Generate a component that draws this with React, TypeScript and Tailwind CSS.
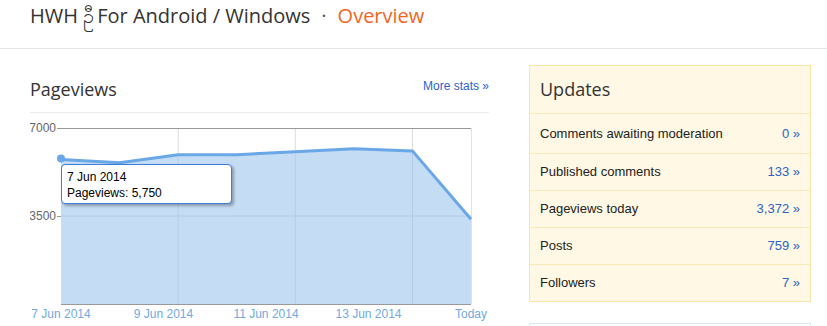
import React from "react";

type Update = { label: string; value: string };

const updates: Update[] = [
  { label: "Comments awaiting moderation", value: "0" },
  { label: "Published comments", value: "133" },
  { label: "Pageviews today", value: "3,372" },
  { label: "Posts", value: "759" },
  { label: "Followers", value: "7" },
];

const views = [5750, 5620, 5940, 5940, 6060, 6170, 6090, 3372];
const xLabels = ["7 Jun 2014", "9 Jun 2014", "11 Jun 2014", "13 Jun 2014", "Today"];

// plot area inside the svg
const X0 = 31;
const X1 = 441;
const Y_TOP = 15;
const Y_BASE = 191;
const MAX = 7000;

const px = (i: number) => X0 + (i * (X1 - X0)) / (views.length - 1);
const py = (v: number) => Y_BASE - (v / MAX) * (Y_BASE - Y_TOP);

function PageviewsChart() {
  const line = views.map((v, i) => `${px(i)},${py(v)}`).join(" ");
  const area = `${X0},${Y_BASE} ${line} ${X1},${Y_BASE}`;
  const mid = py(3500);

  return (
    <div className="relative h-[213px]">
      <svg width="470" height="213" className="block">
        <polygon points={area} fill="#c5dcf5" />
        {[2, 4, 6].map((i) => (
          <line key={i} x1={px(i)} y1={Y_TOP} x2={px(i)} y2={Y_BASE} stroke="#dcdcdc" strokeWidth="1" />
        ))}
        {[2, 4, 6].map((i) => (
          <line key={"f" + i} x1={px(i)} y1={py(views[i]) + 2} x2={px(i)} y2={Y_BASE} stroke="#b4cce8" strokeWidth="1" />
        ))}
        <line x1={X0} y1={mid} x2={X1} y2={mid} stroke="#b4cce8" strokeWidth="1" />
        <line x1={X1 + 0.5} y1={Y_TOP} x2={X1 + 0.5} y2={Y_BASE} stroke="#e2e2e2" strokeWidth="1" />
        <line x1={X0 - 4} y1={Y_TOP + 0.5} x2={X1} y2={Y_TOP + 0.5} stroke="#999" strokeWidth="1" />
        <line x1={X0 - 4} y1={mid + 0.5} x2={X0} y2={mid + 0.5} stroke="#999" strokeWidth="1" />
        <line x1={X0} y1={Y_BASE + 0.5} x2={X1} y2={Y_BASE + 0.5} stroke="#999" strokeWidth="1" />
        <polyline points={line} fill="none" stroke="#6aa7e6" strokeWidth="3" strokeLinejoin="round" />
        <circle cx={px(0)} cy={py(views[0]) - 1} r="4" fill="#6aa7e6" />
        <g fontFamily="'Liberation Sans', Arial, sans-serif" fontSize="12">
          <text x="26" y="19" textAnchor="end" fill="#666">7000</text>
          <text x={26} y={mid + 4} textAnchor="end" fill="#666">3500</text>
          <g fill="#72a9df">
            {xLabels.map((label, i) => (
              <text key={label} x={X0 + i * 102.5} y="205" textAnchor="middle">
                {label}
              </text>
            ))}
          </g>
        </g>
      </svg>
      <div className="absolute left-[31px] top-[51px] w-[171px] h-[40px] rounded-[4px] border border-[#3b7dd8] bg-white px-[5px] pt-[4px] text-[12px] leading-[16px] text-black shadow-[2px_2px_3px_rgba(0,0,0,0.3)] font-['Liberation_Sans',Arial,sans-serif]">
        <div>7 Jun 2014</div>
        <div>Pageviews: 5,750</div>
      </div>
    </div>
  );
}

export default function App() {
  return (
    <div className="w-[827px] h-[326px] overflow-hidden bg-white text-[#333]">
      <div className="h-[49px] border-b border-[#e6e6e6] pl-[30px] pt-[2px] font-['Open_Sans',sans-serif] text-[20px] leading-[28px]">
        <span className="text-[#333]">
          HWH <span className="mr-[3px]">ဦ</span>For Android / Windows
        </span>
        <span className="mx-[11px] text-[#555]">·</span>
        <span className="text-[#f26522]">Overview</span>
      </div>

      <div className="flex gap-[40px] pl-[30px] pt-[16px]">
        <div className="w-[459px] shrink-0">
          <div className="flex h-[48px] items-center justify-between border-b border-[#ebebeb] pt-[1px]">
            <h2 className="font-['Open_Sans',sans-serif] text-[18px] leading-[24px] text-[#333]">Pageviews</h2>
            <a className="mb-[7px] font-['Liberation_Sans',Arial,sans-serif] text-[12px] text-[#2d63c8]">
              More stats »
            </a>
          </div>
          <PageviewsChart />
        </div>

        <div className="w-[282px] shrink-0">
          <div className="border border-[#f8e6a8] bg-[#fef8e4]">
            <div className="flex h-[47px] items-center px-[10px] font-['Open_Sans',sans-serif] text-[18px] text-[#333]">
              Updates
            </div>
            {updates.map((u, i) => (
              <div
                key={u.label}
                className={`flex items-center justify-between border-t border-[#f8e9b6] pl-[10px] pr-[10px] font-['Liberation_Sans',Arial,sans-serif] text-[13px] ${
                  i === 0 ? "h-[40px]" : "h-[37px]"
                }`}
              >
                <span className="text-[#222]">{u.label}</span>
                <a className="text-[#2d63c8]">{u.value} »</a>
              </div>
            ))}
          </div>
          <div className="mt-[21px] h-[40px] border border-[#d7e9f8]" />
        </div>
      </div>
    </div>
  );
}
